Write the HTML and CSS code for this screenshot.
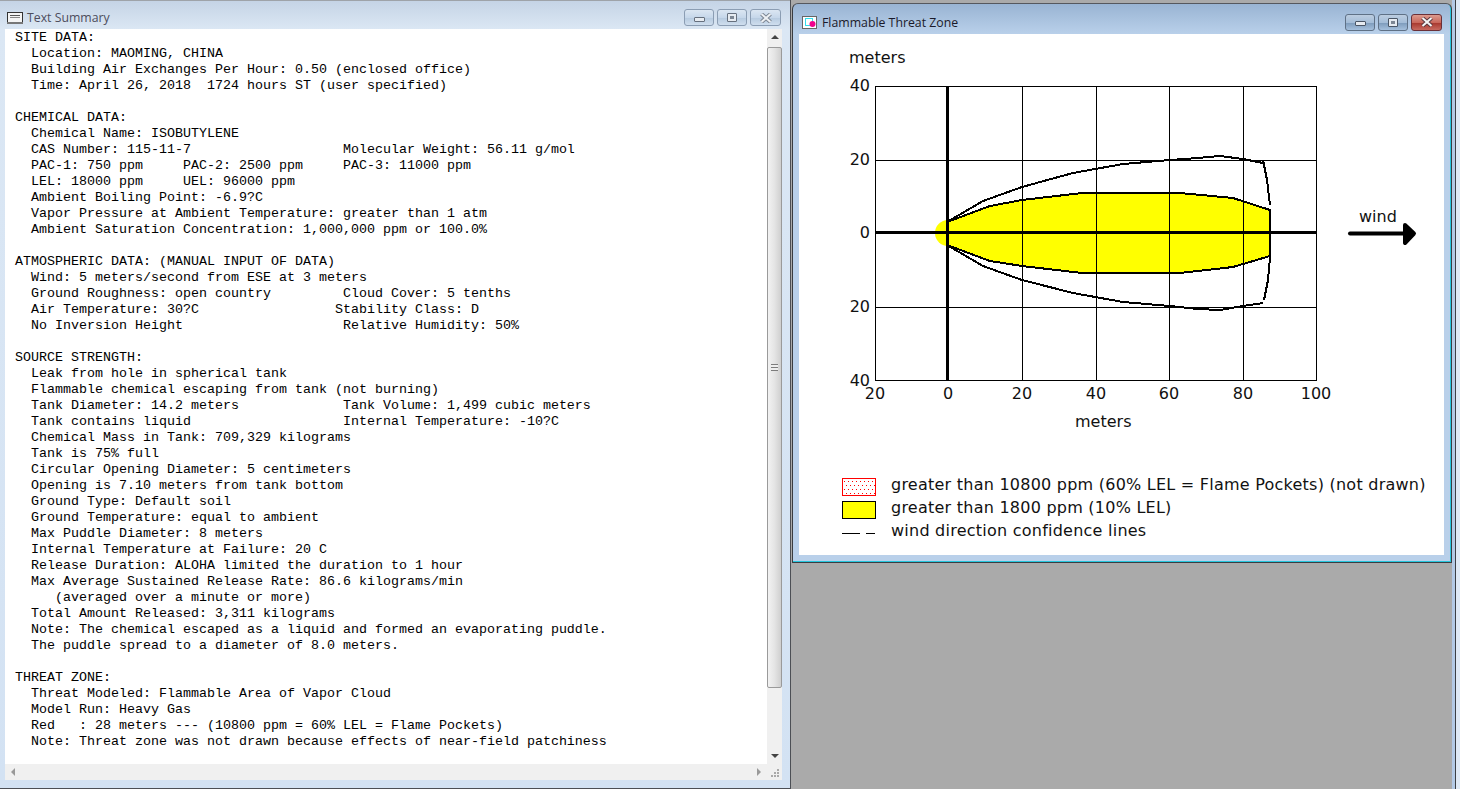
FILE: index.html
```html
<!DOCTYPE html>
<html lang="en">
<head>
<meta charset="UTF-8">
<title>Text Summary / Flammable Threat Zone</title>
<link rel="stylesheet" href="styles.css">
</head>
<body>

<div class="window summary-window">
  <div class="titlebar">
    <svg class="title-icon" width="16" height="12" viewBox="0 0 16 12">
      <rect x="0.5" y="0.5" width="15" height="10" fill="#f4f4f4" stroke="#333"/>
      <rect x="0" y="10" width="16" height="2" fill="#777"/>
      <rect x="3" y="3" width="10" height="1" fill="#555"/>
      <rect x="3" y="5" width="10" height="1" fill="#888"/>
    </svg>
    <span class="title-text">Text Summary</span>
    <div class="win-buttons">
      <div class="win-btn"><span class="glyph-min"></span></div>
      <div class="win-btn"><span class="glyph-max"></span></div>
      <div class="win-btn close"><svg width="14" height="10" viewBox="0 0 14 10"><path d="M2.5 1 L11.5 9 M11.5 1 L2.5 9" stroke="#7d8794" stroke-width="4"/><path d="M2.5 1 L11.5 9 M11.5 1 L2.5 9" stroke="#eef1f4" stroke-width="2"/></svg></div>
    </div>
  </div>
  <div class="client">
    <div class="text-area">
      <pre class="report">SITE DATA:
  Location: MAOMING, CHINA
  Building Air Exchanges Per Hour: 0.50 (enclosed office)
  Time: April 26, 2018  1724 hours ST (user specified)

CHEMICAL DATA:
  Chemical Name: ISOBUTYLENE
  CAS Number: 115-11-7                   Molecular Weight: 56.11 g/mol
  PAC-1: 750 ppm     PAC-2: 2500 ppm     PAC-3: 11000 ppm
  LEL: 18000 ppm     UEL: 96000 ppm
  Ambient Boiling Point: -6.9?C
  Vapor Pressure at Ambient Temperature: greater than 1 atm
  Ambient Saturation Concentration: 1,000,000 ppm or 100.0%

ATMOSPHERIC DATA: (MANUAL INPUT OF DATA)
  Wind: 5 meters/second from ESE at 3 meters
  Ground Roughness: open country         Cloud Cover: 5 tenths
  Air Temperature: 30?C                 Stability Class: D
  No Inversion Height                    Relative Humidity: 50%

SOURCE STRENGTH:
  Leak from hole in spherical tank
  Flammable chemical escaping from tank (not burning)
  Tank Diameter: 14.2 meters             Tank Volume: 1,499 cubic meters
  Tank contains liquid                   Internal Temperature: -10?C
  Chemical Mass in Tank: 709,329 kilograms
  Tank is 75% full
  Circular Opening Diameter: 5 centimeters
  Opening is 7.10 meters from tank bottom
  Ground Type: Default soil
  Ground Temperature: equal to ambient
  Max Puddle Diameter: 8 meters
  Internal Temperature at Failure: 20 C
  Release Duration: ALOHA limited the duration to 1 hour
  Max Average Sustained Release Rate: 86.6 kilograms/min
     (averaged over a minute or more)
  Total Amount Released: 3,311 kilograms
  Note: The chemical escaped as a liquid and formed an evaporating puddle.
  The puddle spread to a diameter of 8.0 meters.

THREAT ZONE:
  Threat Modeled: Flammable Area of Vapor Cloud
  Model Run: Heavy Gas
  Red   : 28 meters --- (10800 ppm = 60% LEL = Flame Pockets)
  Note: Threat zone was not drawn because effects of near-field patchiness</pre>
      <div class="vscroll">
        <span class="arrow-up"></span>
        <div class="vthumb"><span class="grip"></span></div>
        <span class="arrow-down"></span>
      </div>
    </div>
    <div class="hscroll">
      <div class="htrack"><span class="arrow-left"></span><span class="arrow-right"></span></div>
      <div class="size-grip">
        <svg width="15" height="16" viewBox="0 0 15 16" fill="#a9a9a9">
          <rect x="10" y="5" width="2" height="2"/>
          <rect x="7" y="8" width="2" height="2"/><rect x="10" y="8" width="2" height="2"/>
          <rect x="4" y="11" width="2" height="2"/><rect x="7" y="11" width="2" height="2"/><rect x="10" y="11" width="2" height="2"/>
        </svg>
      </div>
    </div>
  </div>
</div>

<div class="desktop">
  <div class="window threat-window">
    <div class="titlebar">
      <svg class="title-icon" width="15" height="13" viewBox="0 0 15 13">
        <rect x="0.5" y="0.5" width="14" height="12" fill="#fff" stroke="#666"/>
        <rect x="3.5" y="2.5" width="7" height="7" fill="none" stroke="#33ddee"/>
        <circle cx="10.5" cy="8" r="3" fill="#f0008c"/>
      </svg>
      <span class="title-text">Flammable Threat Zone</span>
      <div class="win-buttons">
        <div class="win-btn"><span class="glyph-min"></span></div>
        <div class="win-btn"><span class="glyph-max"></span></div>
        <div class="win-btn close"><svg width="14" height="10" viewBox="0 0 14 10"><path d="M2.5 1 L11.5 9 M11.5 1 L2.5 9" stroke="#5a3a40" stroke-width="4"/><path d="M2.5 1 L11.5 9 M11.5 1 L2.5 9" stroke="#f6f6f6" stroke-width="2"/></svg></div>
      </div>
    </div>
    <div class="client plot-client">
      <!-- viewBox uses screen coordinates so the numbers read off the chart directly -->
      <svg class="plot" width="645" height="432" viewBox="799 34 645 432">
        <path class="grid" d="M875.5 86.5H1316.5V380.5H875.5Z M1022.5 86V381 M1096.5 86V381 M1169.5 86V381 M1243.5 86V381 M875 160.5H1317 M875 307.5H1317"/>
        <circle cx="948" cy="233" r="13" fill="#ff0"/>
        <polygon class="zone" points="947,222 990,206 1022,200 1082,193 1180,193 1233,198 1270,210 1270,256 1233,267 1180,273 1082,273 1022,266 990,261 947,245"/>
        <path class="grid" d="M1022.5 193V273 M1096.5 193V273 M1169.5 193V273 M1243.5 198V268"/>
        <polyline class="conf" points="947,222 983,201 1022,187 1073,173 1123,164 1170,160 1198,158 1220,156 1243,159 1263,163"/>
        <polyline class="conf" points="1263,160 1267,180 1270,205"/>
        <polyline class="conf" points="947,245 983,266 1022,280 1073,293 1123,302 1170,306 1198,309 1220,310 1243,306 1263,303"/>
        <polyline class="conf" points="1264,300 1268,280 1270,257"/>
        <path class="axis" d="M947.5 86V381 M875 232.5H1317"/>

        <text class="label" x="849" y="63">meters</text>
        <text class="label end" x="870" y="91">40</text>
        <text class="label end" x="870" y="165">20</text>
        <text class="label end" x="870" y="238">0</text>
        <text class="label end" x="870" y="312">20</text>
        <text class="label end" x="870" y="386">40</text>
        <text class="label mid" x="875" y="399">20</text>
        <text class="label mid" x="948" y="399">0</text>
        <text class="label mid" x="1022" y="399">20</text>
        <text class="label mid" x="1096" y="399">40</text>
        <text class="label mid" x="1169" y="399">60</text>
        <text class="label mid" x="1243" y="399">80</text>
        <text class="label mid" x="1316" y="399">100</text>
        <text class="label" x="1075" y="427">meters</text>

        <text class="label" x="1359" y="222">wind</text>
        <path class="wind-shaft" d="M1350 233.5H1410"/>
        <polygon class="wind-head" points="1405,225 1414,233.5 1405,243"/>
      </svg>
      <div class="legend">
        <div class="legend-row">
          <svg class="swatch" width="34" height="18" viewBox="0 0 34 18">
            <defs>
              <pattern id="dots" width="4" height="8" patternUnits="userSpaceOnUse">
                <rect x="2" y="3" width="1" height="1" fill="#f00"/>
                <rect x="0" y="7" width="1" height="1" fill="#f00"/>
              </pattern>
            </defs>
            <rect x="0.5" y="0.5" width="33" height="17" fill="url(#dots)" stroke="#f00"/>
          </svg>
          <span>greater than 10800 ppm (60% LEL = Flame Pockets) (not drawn)</span>
        </div>
        <div class="legend-row">
          <svg class="swatch" width="34" height="18" viewBox="0 0 34 18">
            <rect x="0.5" y="0.5" width="33" height="17" fill="#ff0" stroke="#000"/>
          </svg>
          <span>greater than 1800 ppm (10% LEL)</span>
        </div>
        <div class="legend-row">
          <svg class="swatch" width="34" height="18" viewBox="0 0 34 18">
            <path d="M0 9.5H18 M24 9.5H33" stroke="#000"/>
          </svg>
          <span>wind direction confidence lines</span>
        </div>
      </div>
    </div>
  </div>
  <div class="back-window"></div>
</div>

</body>
</html>
```

FILE: styles.css
```css
html, body {
    margin: 0;
    height: 100%;
}
body {
    display: flex;
    width: 1460px;
    height: 789px;
    overflow: hidden;
    background: #aaaaaa;
}

/* window chrome */
.window {
    display: flex;
    flex-direction: column;
    box-sizing: border-box;
}
.titlebar {
    display: flex;
    align-items: center;
    flex: none;
    box-sizing: border-box;
    font-family: "Open Sans", "Noto Sans", sans-serif;
    font-size: 12.3px;
}
.title-text { margin-left: 4px; }
.win-buttons {
    display: flex;
    gap: 3px;
    margin-left: auto;
}
.win-btn {
    display: flex;
    align-items: center;
    justify-content: center;
    box-sizing: border-box;
    width: 30px;
    height: 17px;
    border: 1px solid #8b9db3;
    border-radius: 3px;
    background: linear-gradient(#dbe6f2, #c6d7ea 50%, #b7cbe0 55%, #cfdeee);
}
.win-btn.close { width: 31px; }
.glyph-min {
    box-sizing: border-box;
    width: 11px;
    height: 5px;
    margin-top: 3px;
    border: 1px solid #66707e;
    border-radius: 1px;
    background: #e6ebf1;
}
.glyph-max {
    box-sizing: border-box;
    width: 10px;
    height: 9px;
    border: 1px solid #66707e;
    border-radius: 1px;
    background: #7d8794;
    box-shadow: inset 0 0 0 2px #e6ebf1;
}

/* left window */
.summary-window {
    flex: none;
    width: 791px;
    height: 789px;
    padding-bottom: 8px;
    border-right: 1px solid #4c4f55;
    border-bottom: 1px solid #4c4f55;
    background: linear-gradient(#c4d3e5, #dbe7f4 29px, #d3e2f3);
}
.summary-window .titlebar {
    height: 29px;
    padding: 5px 9px 0 7px;
    border-top: 1px solid #9ea3a9;
    color: #4d4d5c;
}
.summary-window .client {
    display: flex;
    flex-direction: column;
    flex: 1;
    min-height: 0;
    margin: 0 8px 0 5px;
}
.text-area {
    display: flex;
    flex: 1;
    min-height: 0;
}
.report {
    flex: 1;
    margin: 0;
    padding: 1px 0 0 10px;
    overflow: hidden;
    background: #fff;
    color: #000;
    font-family: "Liberation Mono", monospace;
    font-size: 13.33px;
    line-height: 16px;
}

/* scrollbars */
.vscroll {
    display: flex;
    flex-direction: column;
    align-items: center;
    flex: none;
    width: 15px;
    background: #f0f0f0;
}
.arrow-up, .arrow-down {
    flex: none;
    width: 0;
    border-left: 4px solid transparent;
    border-right: 4px solid transparent;
}
.arrow-up {
    margin-top: 6px;
    border-bottom: 4px solid #444;
}
.arrow-down {
    margin-bottom: 6px;
    border-top: 4px solid #444;
}
.vthumb {
    display: flex;
    align-items: center;
    justify-content: center;
    box-sizing: border-box;
    width: 15px;
    height: 641px;
    margin: 8px 0 auto;
    border: 1px solid #9a9a9a;
    border-radius: 2px;
    background: linear-gradient(90deg, #f2f2f2, #e4e4e4 50%, #cfcfcf);
}
.grip {
    width: 7px;
    height: 7px;
    background: repeating-linear-gradient(#7c7c7c 0 1px, #eeeeee 1px 3px);
}
.hscroll {
    display: flex;
    flex: none;
    height: 16px;
}
.htrack {
    display: flex;
    align-items: center;
    justify-content: space-between;
    flex: 1;
    padding: 0 6px;
    background: #f0f0f0;
}
.arrow-left, .arrow-right {
    width: 0;
    border-top: 4px solid transparent;
    border-bottom: 4px solid transparent;
}
.arrow-left { border-right: 4px solid #999; }
.arrow-right { border-left: 4px solid #999; }
.size-grip {
    flex: none;
    width: 15px;
    height: 16px;
    background: #f0f0f0;
}

/* right side */
.desktop {
    display: flex;
    flex: 1;
    align-items: flex-start;
    padding-left: 1px;
}
.threat-window {
    flex: none;
    width: 660px;
    height: 560px;
    margin-top: 3px;
    padding: 0 7px 7px 6px;
    border: 1px solid #3a3d42;
    border-top-color: #55585e;
    border-radius: 6px 6px 0 0;
    background: linear-gradient(#99b4d3, #b9d0ea 30px);
    box-shadow: inset -1px -1px 0 #25c6dc;
}
.threat-window .titlebar {
    height: 30px;
    padding: 6px 2px 0 3px;
    color: #1a1a2a;
}
.threat-window .win-btn {
    border-color: #5f7186;
    background: linear-gradient(#bccde0, #a4bdd8 50%, #7f9dbd 55%, #a5c0dd);
}
.threat-window .win-btn.close {
    border-color: #6b3038;
    background: linear-gradient(#dc9a8e, #c9685c 50%, #a93a30 55%, #c76a60);
}
.threat-window .glyph-min, .threat-window .glyph-max { border-color: #4a5666; }
.threat-window .title-text { margin-left: 5px; }
.plot-client {
    flex: 1;
    min-height: 0;
    background: #fff;
}
.plot { display: block; }
.grid {
    fill: none;
    stroke: #000;
    stroke-width: 1;
    shape-rendering: crispEdges;
}
.zone {
    fill: #ff0;
    stroke: #000;
    stroke-width: 2;
    shape-rendering: crispEdges;
}
.conf {
    fill: none;
    stroke: #000;
    stroke-width: 2;
    shape-rendering: crispEdges;
}
.axis {
    fill: none;
    stroke: #000;
    stroke-width: 3;
    shape-rendering: crispEdges;
}
.label {
    font-family: "DejaVu Sans", sans-serif;
    font-size: 16px;
    fill: #111;
}
.label.end { text-anchor: end; }
.label.mid { text-anchor: middle; }
.wind-shaft {
    stroke: #000;
    stroke-width: 4;
    stroke-linecap: round;
}
.wind-head {
    fill: #000;
    stroke: #000;
    stroke-width: 4;
    stroke-linejoin: round;
}

/* legend */
.legend {
    display: flex;
    flex-direction: column;
    padding: 7px 0 0 43px;
    font-family: "DejaVu Sans", sans-serif;
    font-size: 16px;
    letter-spacing: 0.24px;
    color: #111;
}
.legend-row {
    display: flex;
    align-items: center;
    gap: 15px;
    height: 23px;
    white-space: nowrap;
}
.swatch {
    flex: none;
    margin-top: 5px;
}

/* edge of the window behind */
.back-window {
    flex: 1;
    align-self: stretch;
    background: linear-gradient(90deg, #b3c9e5 0 3px, #3c3f44 3px 4px, #dfe9f5 4px);
}
```
